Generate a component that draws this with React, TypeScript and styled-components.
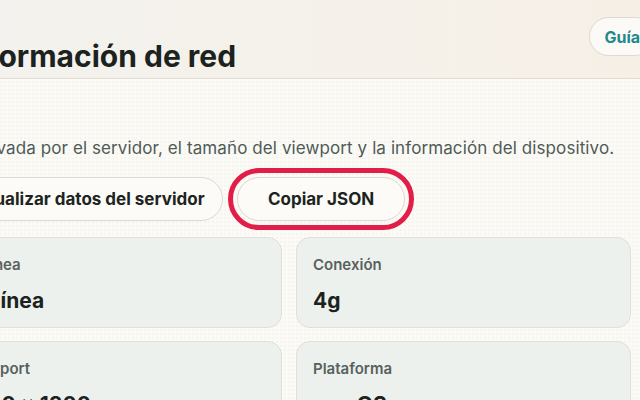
import React from 'react'
import styled, { createGlobalStyle } from 'styled-components'

const GlobalStyle = createGlobalStyle`
  html, body {
    margin: 0;
    padding: 0;
    overflow: hidden;
    background: #fbfaf6;
  }
  body {
    font-family: Inter, "Noto Sans", "Liberation Sans", sans-serif;
    color: #1c2420;
  }
`

const Shell = styled.div`
  width: 720px;
  margin-left: -53px;
  min-height: 400px;
  background-color: #fbfaf6;
  background-image: radial-gradient(#f1ede4 0.6px, transparent 0.8px);
  background-size: 4px 4px;
`

const Header = styled.header`
  height: 79px;
  display: flex;
  justify-content: space-between;
  align-items: flex-start;
  padding: 17px 12px 0 13px;
  box-sizing: border-box;
  background: linear-gradient(90deg, #f3f2ee 0%, #f5f1ea 55%, #f6efe6 100%);
  border-bottom: 1px solid #e2ddd4;
`

const Title = styled.h1`
  margin: 21px 0 0;
  font-size: 30px;
  line-height: 36px;
  font-weight: 700;
  color: #1b2220;
  white-space: nowrap;
`

const GuideButton = styled.button`
  height: 39px;
  padding: 0 14px;
  border: 1px solid #ddd9d0;
  border-radius: 999px;
  background: #fbfaf6;
  color: #1f8a8c;
  font-family: inherit;
  font-size: 16px;
  font-weight: 700;
  white-space: nowrap;
`

const Main = styled.main`
  padding: 57px 36px 0 0;
`

const Description = styled.p`
  margin: 0;
  font-size: 17px;
  line-height: 24px;
  letter-spacing: 0.1px;
  color: #4e5b56;
  white-space: nowrap;
`

const Actions = styled.div`
  display: flex;
  gap: 14px;
  margin-top: 17px;
`

const PillButton = styled.button<{ $focused?: boolean; $minWidth?: number }>`
  height: 44px;
  padding: 0 17px 0 18px;
  min-width: ${(p) => (p.$minWidth ? `${p.$minWidth}px` : 'auto')};
  border: 1px solid #ddd9d0;
  border-radius: 999px;
  background: #fcfbf8;
  color: #1c2420;
  font-family: inherit;
  font-size: 17px;
  font-weight: 700;
  white-space: nowrap;
  outline: ${(p) => (p.$focused ? '5px solid #e11d48' : 'none')};
  outline-offset: 4px;
`

const Grid = styled.div`
  display: grid;
  grid-template-columns: 1fr 1fr;
  column-gap: 14px;
  row-gap: 13px;
  margin-top: 16px;
`

const Card = styled.div`
  height: 91px;
  box-sizing: border-box;
  padding: 17px 16px 0;
  background: #edf1ee;
  border: 1px solid #e3ded6;
  border-radius: 14px;
`

const Label = styled.div`
  font-size: 15px;
  line-height: 20px;
  font-weight: 600;
  color: #58625d;
`

const Value = styled.div`
  margin-top: 12px;
  font-size: 21px;
  line-height: 28px;
  font-weight: 700;
  color: #1b2220;
  white-space: nowrap;
`

const stats = [
  { label: 'En línea', value: 'En línea' },
  { label: 'Conexión', value: '4g' },
  { label: 'Viewport', value: '1440 x 1800' },
  { label: 'Plataforma', value: 'macOS' },
]

const App = () => {
  return (
    <>
      <GlobalStyle />
      <Shell>
        <Header>
          <Title>Información de red</Title>
          <GuideButton>Guía</GuideButton>
        </Header>
        <Main>
          <Description>
            Observada por el servidor, el tamaño del viewport y la información del dispositivo.
          </Description>
          <Actions>
            <PillButton>Actualizar datos del servidor</PillButton>
            <PillButton $focused $minWidth={168}>
              Copiar JSON
            </PillButton>
          </Actions>
          <Grid>
            {stats.map((s) => (
              <Card key={s.label}>
                <Label>{s.label}</Label>
                <Value>{s.value}</Value>
              </Card>
            ))}
          </Grid>
        </Main>
      </Shell>
    </>
  )
}

export default App
